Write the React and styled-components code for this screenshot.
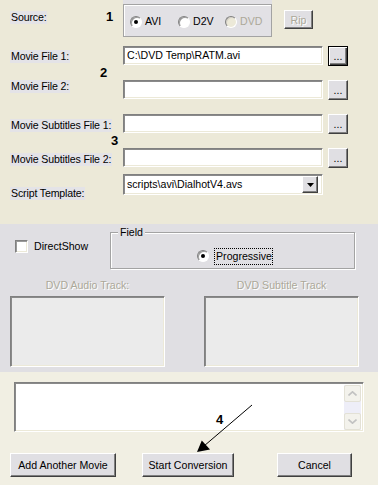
import React from 'react'
import styled, { createGlobalStyle, css } from 'styled-components'

const GlobalStyle = createGlobalStyle`
  html, body { margin: 0; padding: 0; }
  body {
    font-family: "Liberation Sans", Arial, sans-serif;
    font-size: 10.6px;
    color: #000;
    background: #ece9d8;
  }
`

// --- SHARED BEVELS
const sunken = css`
  box-sizing: border-box;
  border: 1px solid;
  border-color: #808080 #ffffff #ffffff #808080;
  box-shadow: inset 1px 1px #8a8a8a, inset -1px -1px #ece9d8;
`

const raised = css`
  box-sizing: border-box;
  border: 1px solid;
  border-color: #ffffff #404040 #404040 #ffffff;
  box-shadow: inset -1px -1px #808080;
  background: #e0dfe3;
`

// --- APP
export default function App() {
  return (
    <>
      <GlobalStyle />
      <Window>
        <TopPanel>
          <Marker left={106} top={9}>1</Marker>
          <Marker left={100} top={65}>2</Marker>
          <Marker left={111} top={133}>3</Marker>

          <Row top={0}>
            <Label offset={11}><span>Source:</span></Label>
            <SourcePanel>
              <SourceBox>
                <RadioOption w={48}>
                  <Radio checked />
                  <span>AVI</span>
                </RadioOption>
                <RadioOption w={47}>
                  <Radio />
                  <span>D2V</span>
                </RadioOption>
                <RadioOption w={40} disabled>
                  <Radio disabled />
                  <span>DVD</span>
                </RadioOption>
              </SourceBox>
            </SourcePanel>
            <RipButton disabled>Rip</RipButton>
          </Row>

          <Row top={9}>
            <Label offset={4}><span>Movie File 1:</span></Label>
            <TextBox>C:\DVD Temp\RATM.avi</TextBox>
            <BrowseButton isDefault>...</BrowseButton>
          </Row>

          <Row top={14}>
            <Label offset={0}><span>Movie File 2:</span></Label>
            <TextBox />
            <BrowseButton>...</BrowseButton>
          </Row>

          <Row top={14}>
            <Label offset={5}><span>Movie Subtitles File 1:</span></Label>
            <TextBox />
            <BrowseButton>...</BrowseButton>
          </Row>

          <Row top={14}>
            <Label offset={5}><span>Movie Subtitles File 2:</span></Label>
            <TextBox />
            <BrowseButton>...</BrowseButton>
          </Row>

          <Row top={6}>
            <Label offset={13}><span>Script Template:</span></Label>
            <Combo>
              <ComboText>scripts\avi\DialhotV4.avs</ComboText>
              <ComboArrow>
                <svg width="7" height="4" viewBox="0 0 7 4">
                  <path d="M0 0h7L3.5 4z" fill="#000" />
                </svg>
              </ComboArrow>
            </Combo>
          </Row>
        </TopPanel>

        <MiddlePanel>
          <OptionsRow>
            <CheckOption>
              <CheckBox />
              <span>DirectShow</span>
            </CheckOption>
            <FieldGroup>
              <GroupCaption>Field</GroupCaption>
              <RadioOption>
                <Radio checked />
                <Focused>Progressive</Focused>
              </RadioOption>
            </FieldGroup>
          </OptionsRow>
          <Tracks>
            <Track>
              <TrackLabel>DVD Audio Track:</TrackLabel>
              <ListBox />
            </Track>
            <Track>
              <TrackLabel>DVD Subtitle Track</TrackLabel>
              <ListBox />
            </Track>
          </Tracks>
        </MiddlePanel>

        <BottomPanel>
          <Memo>
            <MemoBody />
            <ScrollBar>
              <ScrollButton>
                <svg width="9" height="5" viewBox="0 0 9 5">
                  <path d="M0.5 4.5L4.5 0.8L8.5 4.5" fill="none" stroke="#c2c2c2" strokeWidth="1.6" />
                </svg>
              </ScrollButton>
              <ScrollTrack />
              <ScrollButton>
                <svg width="9" height="5" viewBox="0 0 9 5">
                  <path d="M0.5 0.5L4.5 4.2L8.5 0.5" fill="none" stroke="#c2c2c2" strokeWidth="1.6" />
                </svg>
              </ScrollButton>
            </ScrollBar>
          </Memo>

          <Actions>
            <PushButton w={106} ml={0}>Add Another Movie</PushButton>
            <PushButton w={92} ml={26}>Start Conversion</PushButton>
            <PushButton w={75} ml={43}>Cancel</PushButton>
          </Actions>

          <Marker left={216} top={40}>4</Marker>
          <Arrow width="378" height="113" viewBox="0 0 378 113">
            <line x1="252" y1="33" x2="204" y2="74" stroke="#000" strokeWidth="1" />
            <path d="M197 80L201.8 68.4L210 77.6Z" fill="#000" />
          </Arrow>
        </BottomPanel>
      </Window>
    </>
  )
}

// --- STYLES
const Window = styled.div`
  width: 378px;
  height: 485px;
  display: flex;
  flex-direction: column;
  overflow: hidden;
`

const TopPanel = styled.div`
  position: relative;
  height: 224px;
  flex-shrink: 0;
  background: #ece9d8;
`

const Marker = styled.div`
  position: absolute;
  left: ${p => p.left}px;
  top: ${p => p.top}px;
  font-size: 13px;
  font-weight: 700;
  line-height: 15px;
`

const Row = styled.div`
  display: flex;
  align-items: flex-start;
  padding-left: 10px;
  margin-top: ${p => p.top}px;
`

const Label = styled.div`
  width: 113px;
  flex-shrink: 0;
  margin-top: ${p => p.offset}px;
  line-height: 13px;

  span {
    display: inline-block;
    background: #e4e3e7;
    padding: 0 1px;
    letter-spacing: -0.15px;
  }
`

const SourcePanel = styled.div`
  width: 149px;
  height: 37px;
  box-sizing: border-box;
  padding-top: 4px;
  background: #e2e1e5;
`

const SourceBox = styled.div`
  height: 33px;
  box-sizing: border-box;
  border: 1px solid #a3a3a3;
  box-shadow: inset 1px 1px #ffffff;
  display: flex;
  align-items: center;
  padding: 2px 0 0 6px;
`

const RadioOption = styled.label`
  display: flex;
  align-items: center;
  gap: 3px;
  width: ${p => (p.w ? `${p.w}px` : 'auto')};
  color: ${p => (p.disabled ? '#aca899' : '#000')};
  line-height: 13px;
`

const Radio = styled.span`
  position: relative;
  width: 12px;
  height: 12px;
  box-sizing: border-box;
  border-radius: 50%;
  border: 1px solid;
  border-color: #808080 #ffffff #ffffff #808080;
  background: ${p => (p.disabled ? '#ece9d8' : '#ffffff')};
  box-shadow: inset 1px 1px ${p => (p.disabled ? '#d4d0c8' : '#9a9a9a')};
  flex-shrink: 0;

  &::after {
    content: '';
    display: ${p => (p.checked ? 'block' : 'none')};
    position: absolute;
    left: 3px;
    top: 3px;
    width: 4px;
    height: 4px;
    border-radius: 50%;
    background: #000;
  }
`

const RipButton = styled.div`
  ${raised}
  width: 29px;
  height: 19px;
  margin: 10px 0 0 12px;
  display: flex;
  align-items: center;
  justify-content: center;
  color: ${p => (p.disabled ? '#aca899' : '#000')};
  text-shadow: 1px 1px #ffffff;
`

const TextBox = styled.div`
  ${sunken}
  width: 200px;
  height: 19px;
  background: #ffffff;
  padding: 2px 0 0 3px;
  line-height: 13px;
  white-space: nowrap;
`

const BrowseButton = styled.div`
  ${raised}
  width: 20px;
  height: 20px;
  margin-left: 5px;
  display: flex;
  align-items: flex-end;
  justify-content: center;
  padding-bottom: 4px;
  line-height: 9px;

  ${p =>
    p.isDefault &&
    css`
      border: 1px solid #000;
      box-shadow: inset 1px 1px #ffffff, inset -1px -1px #404040,
        inset -2px -2px #808080;
    `}
`

const Combo = styled.div`
  ${sunken}
  width: 200px;
  height: 21px;
  background: #ffffff;
  display: flex;
  align-items: center;
  padding: 0 4px 0 3px;
`

const ComboText = styled.div`
  flex: 1;
  white-space: nowrap;
  line-height: 13px;
`

const ComboArrow = styled.div`
  ${raised}
  width: 16px;
  height: 17px;
  display: flex;
  align-items: center;
  justify-content: center;
`

const MiddlePanel = styled.div`
  height: 148px;
  flex-shrink: 0;
  background: #e0dfe3;
  padding: 0 10px 0 10px;
  box-sizing: border-box;
`

const OptionsRow = styled.div`
  display: flex;
  align-items: flex-start;
  padding-top: 8px;
  height: 52px;
  box-sizing: border-box;
`

const CheckOption = styled.label`
  display: flex;
  align-items: center;
  gap: 6px;
  width: 95px;
  margin: 8px 0 0 5px;
  line-height: 13px;
`

const CheckBox = styled.span`
  width: 13px;
  height: 13px;
  ${sunken}
  box-shadow: inset 1px 1px #9a9a9a, inset -1px -1px #ece9d8;
  background: #ffffff;
  flex-shrink: 0;
`

const FieldGroup = styled.div`
  position: relative;
  width: 245px;
  height: 37px;
  box-sizing: border-box;
  border: 1px solid #a3a3a3;
  box-shadow: inset 1px 1px #ffffff, 1px 1px #ffffff;
  display: flex;
  justify-content: center;
  padding: 11px 0 0 5px;
`

const GroupCaption = styled.div`
  position: absolute;
  left: 7px;
  top: -7px;
  padding: 0 2px;
  background: #e0dfe3;
  line-height: 13px;
`

const Focused = styled.span`
  border: 1px dotted #000;
  padding: 1px 0 1px 1px;
  margin-left: 2px;
`

const Tracks = styled.div`
  display: flex;
  justify-content: space-between;
  padding-right: 9px;
`

const Track = styled.div`
  width: 155px;
  display: flex;
  flex-direction: column;
  align-items: center;
`

const TrackLabel = styled.div`
  color: #aca899;
  text-shadow: 1px 1px #ffffff;
  line-height: 13px;
  margin-top: 3px;
  height: 15px;
`

const ListBox = styled.div`
  ${sunken}
  width: 155px;
  height: 71px;
  margin-top: 2px;
  background: #ebebeb;
`

const BottomPanel = styled.div`
  position: relative;
  flex: 1;
  background: #f1efe3;
  padding: 10px 0 0 0;
`

const Memo = styled.div`
  ${sunken}
  width: 350px;
  height: 50px;
  margin-left: 14px;
  background: #ffffff;
  display: flex;
  padding: 2px 2px 1px 2px;
`

const MemoBody = styled.div`
  flex: 1;
`

const ScrollBar = styled.div`
  width: 17px;
  display: flex;
  flex-direction: column;
  background: #eeedf6;
`

const ScrollButton = styled.div`
  height: 17px;
  box-sizing: border-box;
  border: 1px solid #e3e1d6;
  border-radius: 2px;
  background: #f3f2ec;
  display: flex;
  align-items: center;
  justify-content: center;
`

const ScrollTrack = styled.div`
  flex: 1;
  background: #eeeef8;
`

const Actions = styled.div`
  display: flex;
  margin-top: 21px;
  padding-left: 10px;
`

const PushButton = styled.div`
  ${raised}
  width: ${p => p.w}px;
  height: 24px;
  margin-left: ${p => p.ml}px;
  display: flex;
  align-items: center;
  justify-content: center;
  white-space: nowrap;
`

const Arrow = styled.svg`
  position: absolute;
  left: 0;
  top: 0;
  pointer-events: none;
`
